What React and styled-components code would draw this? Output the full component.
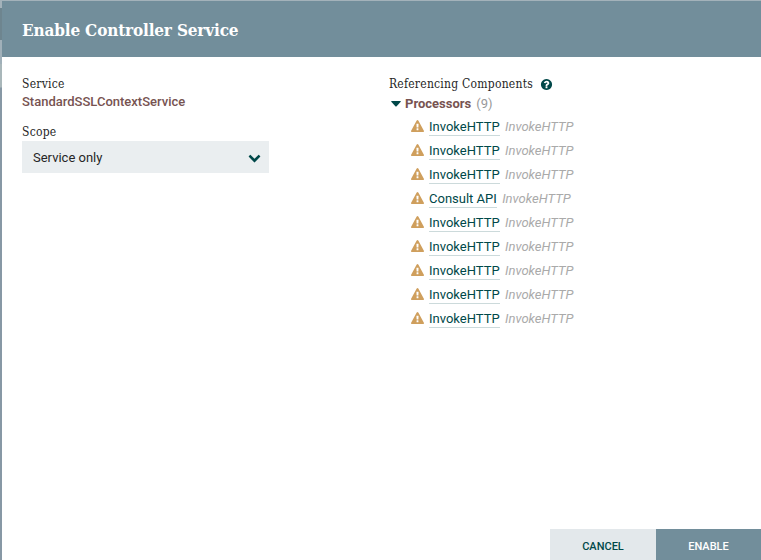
import React from "react";
import styled, { createGlobalStyle } from "styled-components";

const GlobalStyle = createGlobalStyle`
  * { box-sizing: border-box; }
  body { margin: 0; font: 13px/18px Roboto, "Liberation Sans", sans-serif; color: #262626; }
`;

const Page = styled.div`
  width: 761px;
  height: 560px;
  overflow: hidden;
  padding: 1px 0 0 2px;
  background: linear-gradient(#a3b2ba 0 8px, #6e858f 8px 40px, #a0b0b9 40px 64px, #a9b7ba 64px 87px, #8798a5 88px 100%);
`;

const Dialog = styled.section`
  height: 559px;
  display: flex;
  flex-direction: column;
  background: #fff;
`;

const Header = styled.header`
  flex: none;
  height: 56px;
  padding: 2px 0 0 20px;
  display: flex;
  align-items: center;
  background: #728e9b;
  color: #fff;
`;

const Title = styled.h1`
  margin: 0;
  font: bold 17px/24px "Roboto Slab", "DejaVu Serif Condensed", "DejaVu Serif", serif;
  letter-spacing: -0.16px;
  white-space: nowrap;
`;

const Content = styled.main`
  flex: 1;
  display: grid;
  grid-template-columns: 247px 1fr;
  column-gap: 120px;
  padding: 18px 0 0 20px;
`;

const Column = styled.div`
  min-width: 0;
`;

const Label = styled.div`
  height: 18px;
  display: flex;
  align-items: center;
  font: 12px/18px "Roboto Slab", "DejaVu Serif Condensed", "DejaVu Serif", serif;
  letter-spacing: 0.24px;
  white-space: nowrap;
`;

const ServiceName = styled.div`
  height: 18px;
  margin-bottom: 12px;
  font-weight: 500;
  color: #775351;
`;

const Select = styled.div`
  height: 32px;
  padding: 1px 8px 0 11px;
  display: flex;
  align-items: center;
  justify-content: space-between;
  background: #eaeef0;
`;

const Glyph = styled.svg`
  flex: none;
  width: 13px;
  height: 13px;
  fill: #004849;
`;

const HelpIcon = styled(Glyph)`
  margin-left: 7px;
`;

const WarningIcon = styled(Glyph)`
  margin: 0 5px 2px 0;
  fill: #cf9f5d;
`;

const Group = styled.div`
  height: 22px;
  display: flex;
  align-items: center;
  color: #775351;
  font-weight: 700;
`;

const Twist = styled(Glyph)`
  width: 10px;
  height: 6px;
  margin: 0 4px 0 2px;
`;

const Count = styled.span`
  margin-left: 5px;
  color: #999;
  font-weight: 400;
`;

const Row = styled.li`
  height: 24px;
  display: flex;
  align-items: center;
`;

const List = styled.ul`
  margin: 0;
  padding: 0 0 0 22px;
  list-style: none;
`;

const Link = styled.a`
  height: 18px;
  line-height: 17px;
  border-bottom: 1px solid #ccdadb;
  color: #004849;
`;

const Type = styled.span`
  margin-left: 5.4px;
  line-height: 18px;
  color: #aaa;
  font-style: italic;
`;

const Footer = styled.footer`
  flex: none;
  height: 31px;
  display: flex;
  justify-content: flex-end;
`;

const Button = styled.button`
  width: ${(p) => (p.$primary ? "105px" : "106px")};
  height: 34px;
  padding: 2px 0 0;
  border: 0;
  font: 500 11px/32px Roboto, sans-serif;
  background: ${(p) => (p.$primary ? "#728e9b" : "#e3e8eb")};
  color: ${(p) => (p.$primary ? "#fff" : "#004849")};
`;

const Chevron = () => (
  <Glyph viewBox="0 0 1792 1792">
    <path d="M1683 808l-742 741q-19 19-45 19t-45-19l-742-741q-19-19-19-45.5t19-45.5l166-165q19-19 45-19t45 19l531 531 531-531q19-19 45-19t45 19l166 165q19 19 19 45.5t-19 45.5z" />
  </Glyph>
);

const Help = () => (
  <HelpIcon viewBox="0 0 1792 1792">
    <path d="M1024 1376v-192q0-14-9-23t-23-9h-192q-14 0-23 9t-9 23v192q0 14 9 23t23 9h192q14 0 23-9t9-23zm256-672q0-88-55.5-163t-138.5-116-170-41q-243 0-371 213-15 24 8 42l132 100q7 6 19 6 16 0 25-12 53-68 86-92 34-24 86-24 48 0 85.5 26t37.5 59q0 38-20 61t-68 45q-63 28-115.5 86.5t-52.5 125.5v36q0 14 9 23t23 9h192q14 0 23-9t9-23q0-19 21.5-49.5t54.5-49.5q32-18 49-28.5t46-35 44.5-48 28-60.5 12.5-81zm384 192q0 209-103 385.5t-279.5 279.5-385.5 103-385.5-103-279.5-279.5-103-385.5 103-385.5 279.5-279.5 385.5-103 385.5 103 279.5 279.5 103 385.5z" />
  </HelpIcon>
);

const Warning = () => (
  <WarningIcon viewBox="0 0 1792 1792">
    <path d="M1024 1375v-190q0-14-9.5-23.5t-22.5-9.5h-192q-13 0-22.5 9.5t-9.5 23.5v190q0 14 9.5 23.5t22.5 9.5h192q13 0 22.5-9.5t9.5-23.5zm-2-374l18-459q0-12-10-19-13-11-24-11h-220q-11 0-24 11-10 7-10 21l17 457q0 10 10 16.5t24 6.5h185q14 0 23.5-6.5t10.5-16.5zm-14-934l768 1408q35 63-2 126-17 29-46.5 46t-63.5 17h-1536q-34 0-63.5-17t-46.5-46q-37-63-2-126l768-1408q17-31 47-49t65-18 65 18 47 49z" />
  </WarningIcon>
);

const processors = ["InvokeHTTP", "InvokeHTTP", "InvokeHTTP", "Consult API", "InvokeHTTP", "InvokeHTTP", "InvokeHTTP", "InvokeHTTP", "InvokeHTTP"];

export default function App() {
  return (
    <Page>
      <GlobalStyle />
      <Dialog>
        <Header><Title>Enable Controller Service</Title></Header>
        <Content>
          <Column>
            <Label>Service</Label>
            <ServiceName>StandardSSLContextService</ServiceName>
            <Label>Scope</Label>
            <Select>Service only<Chevron /></Select>
          </Column>
          <Column>
            <Label>Referencing Components<Help /></Label>
            <Group>
              <Twist viewBox="0 0 10 6"><path d="M.6 0h8.8q.6.2.3.8L5.4 5.4q-.4.4-.8 0L.3.8Q0 .2.6 0z" /></Twist>
              Processors<Count>(9)</Count>
            </Group>
            <List>
              {processors.map((name, i) => (
                <Row key={i}><Warning /><Link>{name}</Link><Type>InvokeHTTP</Type></Row>
              ))}
            </List>
          </Column>
        </Content>
        <Footer><Button>CANCEL</Button><Button $primary>ENABLE</Button></Footer>
      </Dialog>
    </Page>
  );
}
